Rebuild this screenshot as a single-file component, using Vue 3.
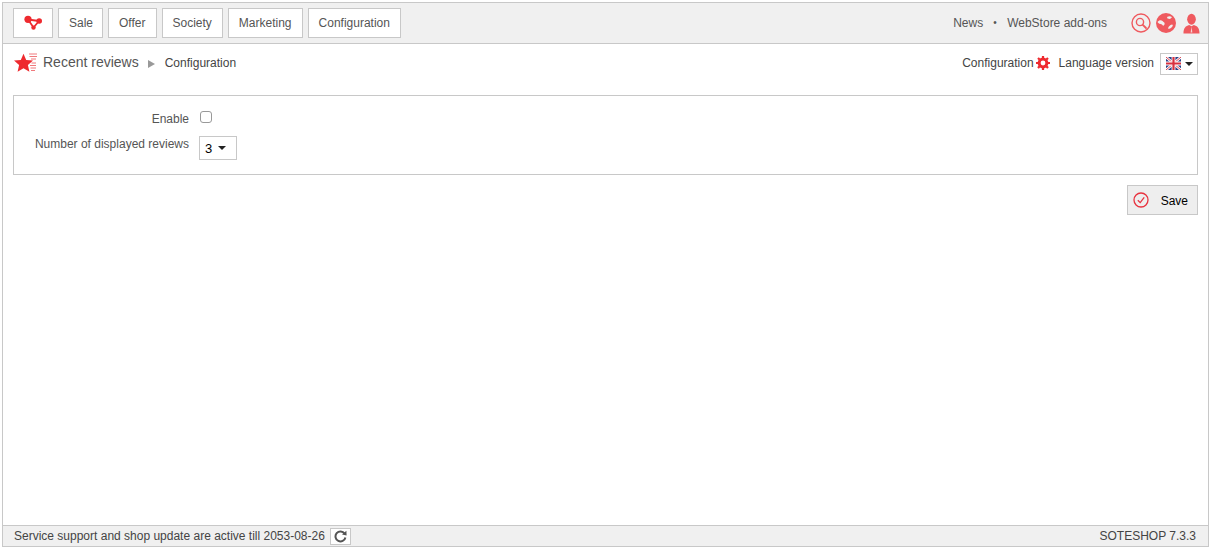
<script setup>
const menu = ['Sale', 'Offer', 'Society', 'Marketing', 'Configuration']
</script>

<template>
  <div class="shell">
    <header class="topbar">
      <nav class="menu">
        <a class="btn logo">
          <svg width="20" height="16" viewBox="0 0 20 16">
            <path d="M5 4.5 L16 6 L10.5 12.5 Z" fill="none" stroke="#ee2a2f" stroke-width="1.8" />
            <circle cx="5" cy="4.3" r="3.6" fill="#ee2a2f" />
            <circle cx="16.2" cy="6" r="2.8" fill="#ee2a2f" />
            <circle cx="10.5" cy="12.6" r="2.2" fill="#ee2a2f" />
          </svg>
        </a>
        <a v-for="m in menu" :key="m" class="btn item">{{ m }}</a>
      </nav>
      <div class="links">
        <span>News</span>
        <span class="dot">•</span>
        <span>WebStore add-ons</span>
      </div>
      <div class="icons">
        <svg width="20" height="20" viewBox="0 0 20 20">
          <circle cx="10" cy="10" r="9" fill="none" stroke="#ef5a5f" stroke-width="1.4" />
          <circle cx="9" cy="9" r="3.6" fill="none" stroke="#ef5a5f" stroke-width="1.4" />
          <path d="M11.8 11.8 L15 15" stroke="#ef5a5f" stroke-width="1.8" stroke-linecap="round" />
        </svg>
        <svg width="20" height="20" viewBox="0 0 20 20">
          <circle cx="10" cy="10" r="10" fill="#ef5a5f" />
          <path d="M1.5 9 C3 7 5 6.5 6.5 8 C8 9.5 9 9.5 8.5 11.5 C8 13 6.5 13 6 11.5 C4 11 2.5 10.5 1.5 9 Z M11 4 C13 2.8 15 3.2 16 4.2 L14 6 L11.5 5.5 Z M12 15.5 C12.5 13.5 14 12 16 11.5 C17 11.5 17 12.5 16.4 13.5 C15.5 15 13.5 16.5 12 15.5 Z" fill="#f0f0f0" />
        </svg>
        <svg class="person" width="17" height="21" viewBox="0 0 18 21">
          <ellipse cx="9" cy="6" rx="4.6" ry="5.8" fill="#ef5a5f" />
          <path d="M0.5 21 C0.5 15 3 13 6.5 12 L9 13.5 L11.5 12 C15 13 17.5 15 17.5 21 Z" fill="#ef5a5f" />
          <path d="M9 14 L9.9 20 L8.1 20 Z" fill="#f5d5d6" />
        </svg>
      </div>
    </header>

    <section class="crumbs">
      <svg class="star" width="23" height="20" viewBox="0 0 23 20">
        <path d="M9.5 0.8 L12.2 7 L19 7.6 L13.9 12 L15.4 18.8 L9.5 15.2 L3.6 18.8 L5.1 12 L0 7.6 L6.8 7 Z" fill="#ee2a2f" />
        <path d="M15 1 H23 M15.5 3.5 H23 M17 6 H22 M17.5 10 H22 M16 12.5 H22 M16.5 15 H22 M17 17.5 H21" stroke="#f0797c" stroke-width="1" />
      </svg>
      <span class="title">Recent reviews</span>
      <span class="arrow"></span>
      <span class="sub">Configuration</span>
      <span class="spacer"></span>
      <span class="sub">Configuration</span>
      <svg class="gear" width="14" height="14" viewBox="0 0 14 14">
        <circle cx="7" cy="7" r="3.9" fill="none" stroke="#ee2a2f" stroke-width="3" />
        <path d="M7 0 V14 M0 7 H14 M2 2 L12 12 M12 2 L2 12" stroke="#ee2a2f" stroke-width="2.2" stroke-dasharray="2.2 9.6 2.2 0" />
      </svg>
      <span class="sub lang">Language version</span>
      <span class="flagbtn">
        <svg width="15" height="13" viewBox="0 0 15 13">
          <rect width="15" height="13" fill="#2b3f86" />
          <path d="M0 0 L15 13 M15 0 L0 13" stroke="#fff" stroke-width="2.6" />
          <path d="M0 0 L15 13 M15 0 L0 13" stroke="#d8303f" stroke-width="0.9" />
          <path d="M7.5 0 V13 M0 6.5 H15" stroke="#fff" stroke-width="3.8" />
          <path d="M7.5 0 V13 M0 6.5 H15" stroke="#d8303f" stroke-width="2.2" />
        </svg>
        <i class="caret"></i>
      </span>
    </section>

    <main class="content">
      <section class="panel">
        <div class="row first">
          <label class="label">Enable</label>
          <span class="check"></span>
        </div>
        <div class="row second">
          <label class="label">Number of displayed reviews</label>
          <span class="select">3<i class="caret"></i></span>
        </div>
      </section>
      <div class="actions">
        <button class="save" type="button">
          <svg width="16" height="16" viewBox="0 0 16 16">
            <circle cx="8" cy="8" r="7" fill="none" stroke="#e8323f" stroke-width="1.3" />
            <path d="M4.8 8.2 L7.2 10.6 L11.2 5.4" fill="none" stroke="#e8323f" stroke-width="1.3" />
          </svg>
          <span class="savetext">Save</span>
        </button>
      </div>
    </main>

    <footer class="footer">
      <span>Service support and shop update are active till 2053-08-26</span>
      <span class="refresh">
        <svg width="13" height="13" viewBox="0 0 13 13">
          <path d="M10.6 3.6 A5 5 0 1 0 11.4 7.5" fill="none" stroke="#555" stroke-width="2" />
          <path d="M8 4.4 L12.6 5.4 L12.4 0.8 Z" fill="#555" />
        </svg>
      </span>
      <span class="spacer"></span>
      <span>SOTESHOP 7.3.3</span>
    </footer>
  </div>
</template>

<style>
html, body { margin: 0; background: #fff; }
</style>

<style scoped>
.shell {
  box-sizing: border-box;
  width: 1207px;
  height: 545px;
  margin: 2px 0 0 2px;
  border: 1px solid #c8c8c8;
  display: flex;
  flex-direction: column;
  font-family: "Liberation Sans", Arial, sans-serif;
  font-size: 12px;
  color: #555;
}
.topbar {
  box-sizing: border-box;
  height: 41px;
  flex: none;
  display: flex;
  align-items: center;
  padding: 0 8px 0 10px;
  background: #f0f0f0;
  border-bottom: 1px solid #c8c8c8;
}
.menu { display: flex; gap: 5px; flex: 1; }
.btn {
  box-sizing: border-box;
  height: 30px;
  padding: 0 10px;
  display: flex;
  align-items: center;
  background: #fff;
  border: 1px solid #c8c8c8;
}
.item:nth-child(2) { padding-right: 9px; }
.logo { width: 40px; justify-content: center; padding: 0; }
.links { display: flex; gap: 10px; margin-right: 24px; }
.dot { font-size: 10px; line-height: 14px; color: #555; width: 4px; }
.icons { display: flex; gap: 5px; align-items: center; }
.person { margin-left: 2px; }
.crumbs {
  box-sizing: border-box;
  height: 39px;
  flex: none;
  display: flex;
  align-items: center;
  padding: 0 10px 2px 11px;
}
.star { margin-right: 6px; }
.title { font-size: 14px; color: #555; margin-top: -2px; }
.arrow {
  width: 0;
  height: 0;
  margin: 2px 10px 0 9px;
  border-left: 7px solid #999;
  border-top: 4px solid transparent;
  border-bottom: 4px solid transparent;
}
.sub { color: #444; }
.spacer { flex: 1; }
.gear { margin: 0 9px 0 2px; }
.lang { margin-right: 6px; }
.flagbtn {
  box-sizing: border-box;
  width: 38px;
  height: 22px;
  margin-top: 2px;
  display: flex;
  align-items: center;
  justify-content: center;
  gap: 4px;
  border: 1px solid #c8c8c8;
}
.caret {
  display: inline-block;
  width: 0;
  height: 0;
  border-top: 4px solid #222;
  border-left: 4px solid transparent;
  border-right: 4px solid transparent;
}
.content {
  flex: 1;
  padding: 12px 10px 0;
}
.panel {
  box-sizing: border-box;
  height: 80px;
  border: 1px solid #c8c8c8;
  padding-top: 13px;
}
.row { display: flex; }
.label { width: 175px; text-align: right; }
.first { height: 24px; align-items: flex-start; padding-top: 3px; box-sizing: border-box; }
.check {
  box-sizing: border-box;
  width: 12px;
  height: 12px;
  margin: 0 0 0 11px;
  border: 1px solid #999;
  border-radius: 3px;
  background: #fff;
  position: relative;
  top: -1px;
}
.second { align-items: flex-start; padding-top: 2px; }
.second .label { padding-top: 2px; }
.select {
  box-sizing: border-box;
  width: 38px;
  height: 24px;
  margin-left: 10px;
  padding-left: 5px;
  display: flex;
  align-items: center;
  gap: 6px;
  margin-top: 1px;
  border: 1px solid #c8c8c8;
  color: #000;
  font-size: 13px;
}
.actions { display: flex; justify-content: flex-end; padding-top: 10px; }
.save {
  box-sizing: border-box;
  width: 71px;
  height: 30px;
  padding: 0 9px 0 5px;
  display: flex;
  align-items: center;
  justify-content: space-between;
  background: #eee;
  border: 1px solid #c8c8c8;
  font: 12px "Liberation Sans", Arial, sans-serif;
  color: #000;
}
.savetext { margin-top: 2px; }
.footer {
  box-sizing: border-box;
  height: 21px;
  flex: none;
  display: flex;
  align-items: center;
  padding: 0 12px 0 11px;
  background: #f0f0f0;
  border-top: 1px solid #c8c8c8;
  color: #444;
}
.refresh {
  box-sizing: border-box;
  width: 21px;
  height: 17px;
  margin-left: 5px;
  display: flex;
  align-items: center;
  justify-content: center;
  background: #fff;
  border: 1px solid #c8c8c8;
}
</style>
